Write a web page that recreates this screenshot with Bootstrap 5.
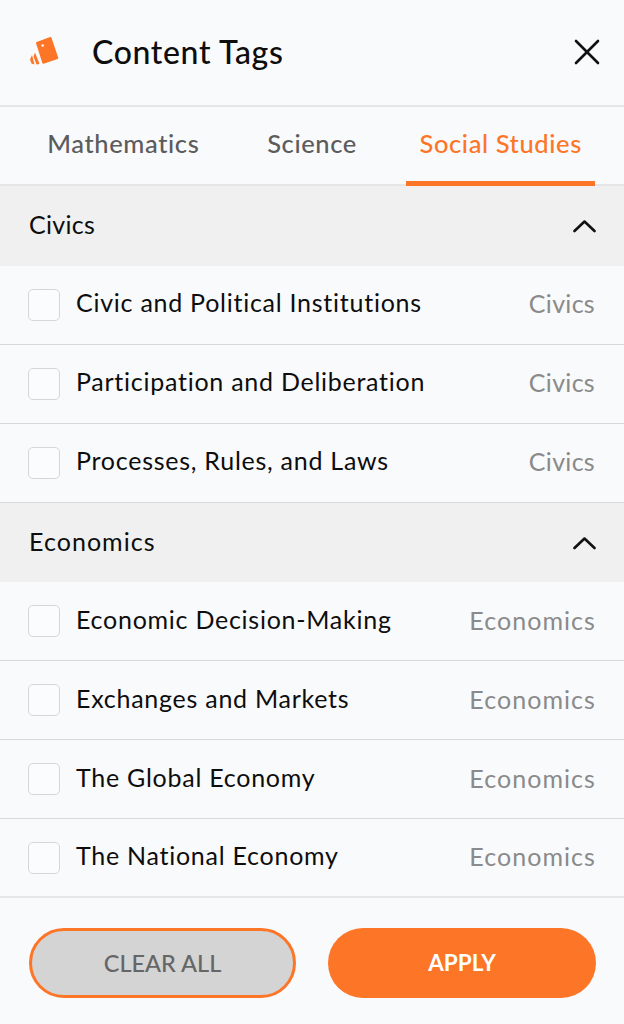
<!DOCTYPE html>
<html lang="en">
<head>
<meta charset="utf-8">
<title>Content Tags</title>
<link rel="stylesheet" href="https://cdn.jsdelivr.net/npm/bootstrap@5.3.0/dist/css/bootstrap.min.css">
<style>
html,body{height:100%;}
body{background:#f9fafc;font-family:Lato,"Liberation Sans",sans-serif;color:#0d0d0d;overflow:hidden;}
.panel-frame{width:624px;height:1024px;}
.head-bar{height:107px;border-bottom:2px solid #e5e6e8;padding:0 24px 0 29px;}
.head-title{font-size:32px;font-weight:500;margin-left:31px;line-height:1;letter-spacing:.65px;}
.tab-bar{height:79px;border-bottom:2px solid #e5e6e8;padding:0 29px;}
.tab-item{font-size:25.5px;color:#5c5c5c;font-weight:500;height:79px;line-height:73px;margin-bottom:-2px;border:0;border-bottom:5px solid transparent;text-align:center;letter-spacing:.6px;background:none;padding:0 0 2px;flex:1 1 0;}
.tab-item.now{color:#fd7526;border-bottom-color:#fd7526;}
.group-head{height:80px;background:#f0f0f0;padding:0 28px 2px 29px;font-size:25px;letter-spacing:.3px;}
.chev-icon{margin-top:2px;}
.tag-row{height:79px;border-bottom:1px solid #d9d9db;padding:0 29px 4px;font-size:25px;letter-spacing:.74px;}
.tag-box{width:32px;height:32px;border:1.5px solid #d6d6d8;border-radius:5px;background:#fbfcfd;margin:4px 16px 0 -1px;flex:none;}
.tag-cat{color:#8a8a8a;margin-left:auto;letter-spacing:.3px;padding-top:2px;}
.word-wide{letter-spacing:1.05px;margin-right:-1px;}
.foot-bar{border-top:2px solid #e5e6e8;height:128px;padding:30px 28px 0 29px;gap:32px;margin-top:-2px;}
.pill-btn{height:70px;border-radius:35px;padding:0;}
.pill-clear{background:#d4d4d4;border:3px solid #fd7526;color:#666;font-size:23.5px;font-weight:500;flex:0 0 267px;}
.pill-apply{background:#fd7526;border:0;color:#fff;font-size:22.5px;font-weight:700;flex:0 0 268px;}
</style>
</head>
<body>
<div class="panel-frame d-flex flex-column">
  <div class="head-bar d-flex align-items-center">
    <svg width="32" height="30" viewBox="29 37.5 32 30" overflow="visible" aria-hidden="true">
      <path d="M37 43.5 L50.5 38.5 L57.3 58.5 L43.3 63.3 Z" fill="#fd7526" stroke="#fd7526" stroke-width="2" stroke-linejoin="round"/>
      <circle cx="42.7" cy="46" r="1.3" fill="#f9fafc"/>
      <path d="M35 53 L39.5 64.5 L36.5 65 L33.5 57 Z M32 55.5 L34.5 65 L31.5 64 L30 60 Z" fill="#fd7526"/>
    </svg>
    <span class="head-title">Content Tags</span>
    <svg class="ms-auto" width="26" height="26" viewBox="0 0 26 26" aria-hidden="true"><path d="M2 2 L24 24 M24 2 L2 24" stroke="#111" stroke-width="2.6" stroke-linecap="round" fill="none"/></svg>
  </div>
  <div class="tab-bar d-flex">
    <button class="tab-item">Mathematics</button>
    <button class="tab-item">Science</button>
    <button class="tab-item now">Social Studies</button>
  </div>
  <div class="group-head d-flex align-items-center justify-content-between">Civics
    <svg class="chev-icon" width="23" height="14" viewBox="0 0 23 14" aria-hidden="true"><path d="M1.5 12 L11.5 2.5 L21.5 12" stroke="#111" stroke-width="2.6" stroke-linecap="round" stroke-linejoin="round" fill="none"/></svg>
  </div>
  <div class="tag-row d-flex align-items-center"><span class="tag-box"></span>Civic and Political Institutions<span class="tag-cat">Civics</span></div>
  <div class="tag-row d-flex align-items-center"><span class="tag-box"></span>Participation and Deliberation<span class="tag-cat">Civics</span></div>
  <div class="tag-row d-flex align-items-center"><span class="tag-box"></span>Processes, Rules, and Laws<span class="tag-cat">Civics</span></div>
  <div class="group-head d-flex align-items-center justify-content-between"><span class="word-wide">Economics</span>
    <svg class="chev-icon" width="23" height="14" viewBox="0 0 23 14" aria-hidden="true"><path d="M1.5 12 L11.5 2.5 L21.5 12" stroke="#111" stroke-width="2.6" stroke-linecap="round" stroke-linejoin="round" fill="none"/></svg>
  </div>
  <div class="tag-row d-flex align-items-center"><span class="tag-box"></span>Economic Decision-Making<span class="tag-cat word-wide">Economics</span></div>
  <div class="tag-row d-flex align-items-center"><span class="tag-box"></span>Exchanges and Markets<span class="tag-cat word-wide">Economics</span></div>
  <div class="tag-row d-flex align-items-center"><span class="tag-box"></span>The Global Economy<span class="tag-cat word-wide">Economics</span></div>
  <div class="tag-row d-flex align-items-center"><span class="tag-box"></span>The National Economy<span class="tag-cat word-wide">Economics</span></div>
  <div class="foot-bar d-flex">
    <button class="btn pill-btn pill-clear">CLEAR ALL</button>
    <button class="btn pill-btn pill-apply">APPLY</button>
  </div>
</div>
<script src="https://cdn.jsdelivr.net/npm/bootstrap@5.3.0/dist/js/bootstrap.bundle.min.js"></script>
</body>
</html>
